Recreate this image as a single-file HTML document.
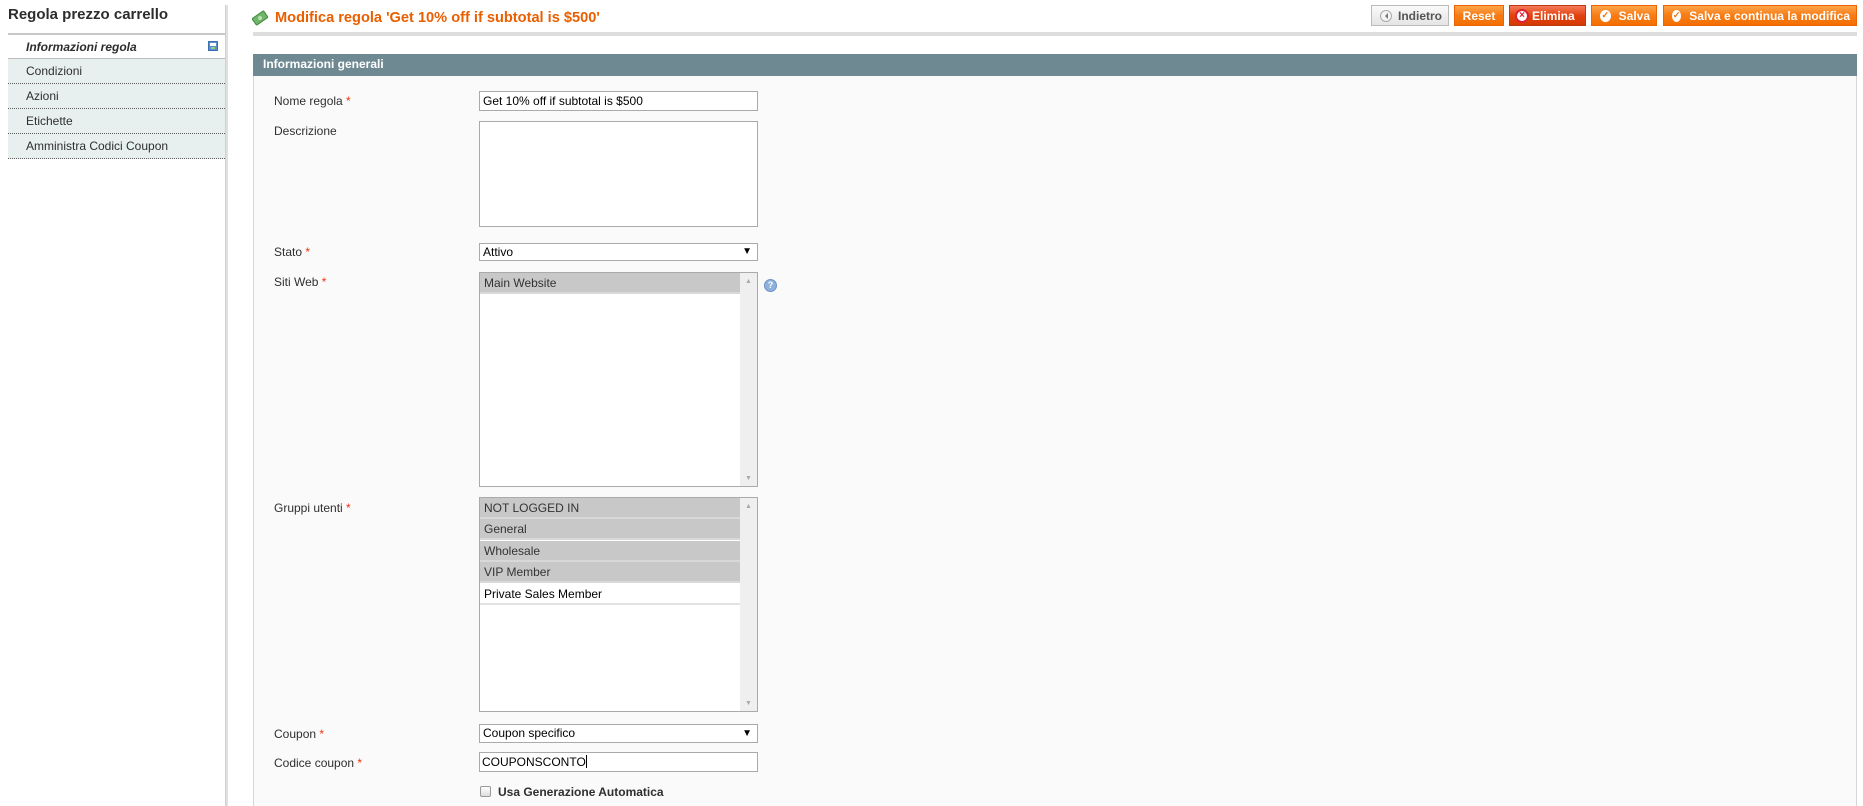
<!DOCTYPE html>
<html><head><meta charset="utf-8"><style>
*{margin:0;padding:0;box-sizing:border-box}
html,body{width:1863px;height:806px;overflow:hidden}
body{background:#fff;font-family:"Liberation Sans",Arial,sans-serif;font-size:12px;color:#2f2f2f;position:relative}
.a{position:absolute}
.side{left:225px;top:5px;width:3px;height:820px;background:#e0e0e0;border-left:1px solid #d0d0d0}
.stitle{left:8px;top:6px;font-size:15px;font-weight:bold;color:#2d2d2d}
.tab{left:8px;width:217px;height:25px;background:#e7efef;border-bottom:1px dotted #5e5e5e;padding-left:18px;line-height:24px;font-size:12px;color:#2f2f2f}
.btn{top:5px;height:21px;font-size:12px;font-weight:bold;color:#fff;border:1px solid #ed6502;background:linear-gradient(#fca54a,#f77c16 50%,#f36f00);padding:0 6px;white-space:nowrap;display:flex;align-items:center}
.ic{display:inline-flex;align-items:center;justify-content:center;width:12px;height:12px;border-radius:50%;background:#fff;color:#f36f00;font-size:9px;margin:0 8px 0 2px}
.lbl{left:274px;font-size:12px;color:#2f2f2f}
.lbl i{color:#eb340a;font-style:normal}
.inp{left:479px;width:279px;background:#fff;border:1px solid #aaa;font-size:12px;color:#000;padding-left:3px}
.opt{left:0;width:260px;height:21px;background:#c8c8c8;border-bottom:2px solid #d8d8d8;padding-left:4px;line-height:20px;color:#333}
.sb{right:0;top:0;width:17px;bottom:0;background:#efefef}
</style></head><body>
<div class="a side"></div>
<div class="a stitle">Regola prezzo carrello</div>
<div class="a" style="left:8px;top:33px;width:217px;height:2px;background:#c8c8c8"></div>
<div class="a" style="left:8px;top:35px;width:217px;height:24px;background:#fff;border-bottom:1px solid #bcbcbc;padding-left:18px;line-height:24px;font-style:italic;font-weight:bold;color:#2d2d2d">Informazioni regola</div>
<div class="a" style="left:208px;top:41px;width:10px;height:10px;background:#5b8fd0;border:1px solid #3d6fb0"><div style="margin:1px;height:3px;background:#fff"></div><div style="margin:1px 2px;height:2px;background:#8fd07a"></div></div>
<div class="a tab" style="top:59px">Condizioni</div>
<div class="a tab" style="top:84px">Azioni</div>
<div class="a tab" style="top:109px">Etichette</div>
<div class="a tab" style="top:134px">Amministra Codici Coupon</div>

<svg class="a" style="left:252px;top:10px" width="16" height="16" viewBox="0 0 16 16"><g transform="rotate(-35 8 8)"><rect x="1" y="4" width="14" height="8" rx="1" fill="#6fb56a" stroke="#3f8a3a"/><circle cx="8" cy="8" r="2" fill="#b8e0b0"/></g></svg>
<div class="a" style="left:275px;top:10px;font-size:14.6px;font-weight:bold;color:#eb5e00">Modifica regola 'Get 10% off if subtotal is $500'</div>
<div class="a" style="left:253px;top:32px;width:1604px;height:4px;background:#ddd"></div>

<div class="a btn" style="left:1371px;width:78px;color:#555;border-color:#bbb;background:linear-gradient(#fafafa,#e4e4e4);padding-left:8px"><span style="display:inline-flex;align-items:center;justify-content:center;width:12px;height:12px;border-radius:50%;border:1px solid #aaa;background:#f4f4f4;margin-right:6px"><span style="border:3px solid transparent;border-right-color:#777;border-left:0"></span></span>Indietro</div>
<div class="a btn" style="left:1454px;width:50px;justify-content:center">Reset</div>
<div class="a btn" style="left:1509px;width:77px;background:linear-gradient(#f67b5a,#e1420e 50%,#d63a05);border-color:#bb3a0e;padding-left:5px"><span style="display:inline-flex;align-items:center;justify-content:center;width:14px;height:14px;border-radius:50%;background:#fff;border:2px solid #d23;margin-right:3px;color:#d23;font-size:10px">×</span>Elimina</div>
<div class="a btn" style="left:1591px;width:66px"><span class="ic">✓</span>Salva</div>
<div class="a btn" style="left:1663px;width:194px"><span class="ic">✓</span>Salva e continua la modifica</div>

<div class="a" style="left:253px;top:54px;width:1604px;height:22px;background:#6f8992;color:#fff;font-weight:bold;padding-left:10px;line-height:21px">Informazioni generali</div>
<div class="a" style="left:253px;top:76px;width:1604px;height:760px;background:#fafafa;border:1px solid #d6d6d6;border-top:0"></div>

<div class="a lbl" style="top:94px">Nome regola <i>*</i></div>
<div class="a inp" style="top:91px;height:20px;line-height:18px">Get 10% off if subtotal is $500</div>
<div class="a lbl" style="top:124px">Descrizione</div>
<div class="a inp" style="top:121px;height:106px"></div>
<div class="a lbl" style="top:245px">Stato <i>*</i></div>
<div class="a inp" style="top:243px;height:18px;line-height:16px">Attivo<span style="position:absolute;right:5px;font-size:10px">▼</span></div>
<div class="a lbl" style="top:275px">Siti Web <i>*</i></div>
<div class="a inp" style="top:272px;height:215px;padding:0"><div class="a opt" style="top:0">Main Website</div><div class="a sb"><span class="a" style="left:5px;top:5px;font-size:7px;color:#aaa">▲</span><span class="a" style="left:5px;bottom:4px;font-size:7px;color:#aaa">▼</span></div></div>
<div class="a" style="left:764px;top:279px;width:13px;height:13px;border-radius:50%;background:#8fb2dd;border:1px solid #6b93c8;color:#fff;font-size:9px;line-height:11px;text-align:center;font-weight:bold">?</div>
<div class="a lbl" style="top:501px">Gruppi utenti <i>*</i></div>
<div class="a inp" style="top:497px;height:215px;padding:0">
<div class="a opt" style="top:0">NOT LOGGED IN</div>
<div class="a opt" style="top:21px">General</div>
<div class="a opt" style="top:43px">Wholesale</div>
<div class="a opt" style="top:64px">VIP Member</div>
<div class="a opt" style="top:86px;background:#fff;color:#000;border-bottom-color:#e2e2e2">Private Sales Member</div>
<div class="a sb"><span class="a" style="left:5px;top:5px;font-size:7px;color:#aaa">▲</span><span class="a" style="left:5px;bottom:4px;font-size:7px;color:#aaa">▼</span></div></div>
<div class="a lbl" style="top:727px">Coupon <i>*</i></div>
<div class="a inp" style="top:724px;height:19px;line-height:17px">Coupon specifico<span style="position:absolute;right:5px;font-size:10px">▼</span></div>
<div class="a lbl" style="top:756px">Codice coupon <i>*</i></div>
<div class="a inp" style="top:752px;height:20px;line-height:18px;padding-left:2px">COUPONSCONTO<span style="display:inline-block;width:1px;height:13px;background:#000;vertical-align:-2px"></span></div>
<div class="a" style="left:480px;top:786px;width:11px;height:11px;border:1px solid #999;border-radius:2px;background:linear-gradient(#fff,#ddd)"></div>
<div class="a" style="left:498px;top:785px;font-weight:bold;color:#2f2f2f">Usa Generazione Automatica</div>
</body></html>
